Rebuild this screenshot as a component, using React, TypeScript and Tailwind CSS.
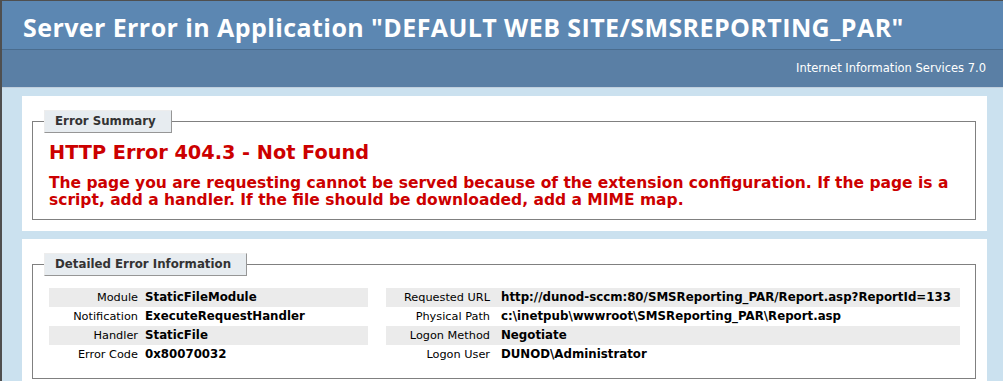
const leftRows = [
  { label: 'Module', value: 'StaticFileModule' },
  { label: 'Notification', value: 'ExecuteRequestHandler' },
  { label: 'Handler', value: 'StaticFile' },
  { label: 'Error Code', value: '0x80070032' },
];

const rightRows = [
  { label: 'Requested URL', value: 'http://dunod-sccm:80/SMSReporting_PAR/Report.asp?ReportId=133' },
  { label: 'Physical Path', value: 'c:\\inetpub\\wwwroot\\SMSReporting_PAR\\Report.asp' },
  { label: 'Logon Method', value: 'Negotiate' },
  { label: 'Logon User', value: 'DUNOD\\Administrator' },
];

const Legend = ({ children }: { children: React.ReactNode }) => (
  <legend className="-ml-[5px] bg-[#e7ecf0] border-t border-l border-t-[#ededed] border-l-[#ededed] border-r border-b border-r-[#969696] border-b-[#969696] pt-[4px] pb-[4px] pl-[10px] pr-[15px] text-[11.8px] leading-[13px] font-bold text-[#333333]">
    {children}
  </legend>
);

const DetailTable = ({
  rows,
  labelWidth,
  labelPad,
}: {
  rows: { label: string; value: string }[];
  labelWidth: string;
  labelPad: string;
}) => (
  <div className="flex flex-col">
    {rows.map((row, i) => (
      <div key={row.label} className={`flex h-[19px] items-center ${i % 2 === 0 ? 'bg-[#ebebeb]' : ''}`}>
        <div className={`${labelWidth} ${labelPad} shrink-0 text-right font-normal text-[11.3px]`}>{row.label}</div>
        <div className="font-bold whitespace-nowrap text-[11.8px]">{row.value}</div>
      </div>
    ))}
  </div>
);

export default function App() {
  return (
    <div
      className="min-h-screen bg-[#cbe1ef] border-t border-l-2 border-[#4f4f4f] text-[11.5px] leading-[13px] text-black"
      style={{ fontFamily: '"DejaVu Sans", Verdana, sans-serif' }}
    >
      {/* Header */}
      <div className="h-[48px] bg-[#5c87b2] pl-[21px] flex items-center">
        <h1
          className="text-white font-bold text-[25px] leading-[28px] pt-[3px] tracking-[0.42px] whitespace-nowrap"
          style={{ fontFamily: '"Open Sans", "Noto Sans", sans-serif' }}
        >
          Server Error in Application "DEFAULT WEB SITE/SMSREPORTING_PAR"
        </h1>
      </div>

      {/* Server version */}
      <div className="h-[39px] bg-[#5a7fa5] border-t border-t-[#4a6c8e] border-b border-b-[#c1cfdd] flex items-center justify-end pr-[17px] text-white">
        Internet Information Services 7.0
      </div>

      <div className="pt-[8px] pl-[20px]">
        {/* Error summary */}
        <div className="w-[965px] bg-white pt-[10px] pb-[11px] pl-[10px] pr-[11px]">
          <fieldset className="mt-[4px] border border-[#808080] pl-[16px] pr-[15px] pb-[10px]">
            <Legend>Error Summary</Legend>
            <h3 className="mt-[9px] text-[19.3px] leading-[22px] font-bold text-[#cc0000]">
              HTTP Error 404.3 - Not Found
            </h3>
            <h4 className="mt-[11px] text-[15.5px] leading-[17px] font-bold text-[#cc0000]">
              The page you are requesting cannot be served because of the extension configuration. If the page is a
              script, add a handler. If the file should be downloaded, add a MIME map.
            </h4>
          </fieldset>
        </div>

        {/* Detailed error information */}
        <div className="mt-[8px] w-[965px] bg-white pt-[10px] pb-[11px] pl-[10px] pr-[11px]">
          <fieldset className="mt-[4px] border border-[#808080] pl-[16px] pr-[15px] pb-[14px]">
            <Legend>Detailed Error Information</Legend>
            <div className="mt-[12px] flex">
              <div className="w-[319px] mr-[18px] shrink-0">
                <DetailTable rows={leftRows} labelWidth="w-[96px]" labelPad="pr-[7px]" />
              </div>
              <div className="w-[574px] shrink-0">
                <DetailTable rows={rightRows} labelWidth="w-[115px]" labelPad="pr-[11px]" />
              </div>
            </div>
          </fieldset>
        </div>
      </div>
    </div>
  );
}
